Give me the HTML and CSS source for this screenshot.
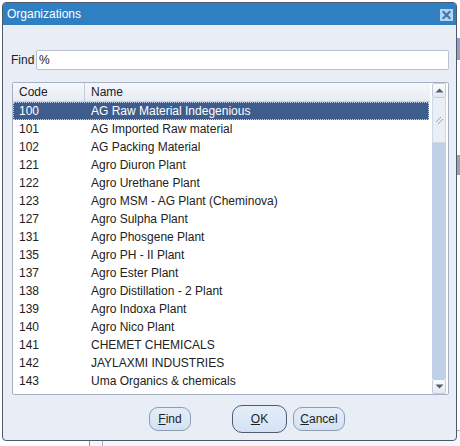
FILE: index.html
```html
<!DOCTYPE html>
<html>
<head>
<meta charset="utf-8">
<link rel="stylesheet" href="styles.css">
</head>
<body>
<div class="backdrop">
  <div class="bd-band"></div>
  <div class="bd-grey"></div>
  <div class="bd-bottom"><div class="bd-inner"></div></div>
</div>
<div class="dialog">
  <div class="titlebar">
    <span class="title">Organizations</span>
    <span class="close"><svg width="13" height="12" viewBox="0 0 13 12"><path d="M3.5 3 L9.5 9 M9.5 3 L3.5 9" stroke="#3a78b8" stroke-width="2.2" stroke-linecap="square"/></svg></span>
  </div>
  <div class="content">
    <div class="find-row">
      <span class="find-label">Find</span>
      <div class="input">%</div>
    </div>
    <div class="list">
      <div class="table">
        <div class="thead"><div class="c1">Code</div><div class="c2">Name</div></div>
        <div class="row sel"><div class="c1">100</div><div class="c2">AG Raw Material Indegenious</div></div>
        <div class="row"><div class="c1">101</div><div class="c2">AG Imported Raw material</div></div>
        <div class="row"><div class="c1">102</div><div class="c2">AG Packing Material</div></div>
        <div class="row"><div class="c1">121</div><div class="c2">Agro Diuron Plant</div></div>
        <div class="row"><div class="c1">122</div><div class="c2">Agro Urethane Plant</div></div>
        <div class="row"><div class="c1">123</div><div class="c2">Agro MSM - AG Plant (Cheminova)</div></div>
        <div class="row"><div class="c1">127</div><div class="c2">Agro Sulpha Plant</div></div>
        <div class="row"><div class="c1">131</div><div class="c2">Agro Phosgene Plant</div></div>
        <div class="row"><div class="c1">135</div><div class="c2">Agro PH - II Plant</div></div>
        <div class="row"><div class="c1">137</div><div class="c2">Agro Ester Plant</div></div>
        <div class="row"><div class="c1">138</div><div class="c2">Agro Distillation - 2 Plant</div></div>
        <div class="row"><div class="c1">139</div><div class="c2">Agro Indoxa Plant</div></div>
        <div class="row"><div class="c1">140</div><div class="c2">Agro Nico Plant</div></div>
        <div class="row"><div class="c1">141</div><div class="c2">CHEMET CHEMICALS</div></div>
        <div class="row"><div class="c1">142</div><div class="c2">JAYLAXMI INDUSTRIES</div></div>
        <div class="row"><div class="c1">143</div><div class="c2">Uma Organics &amp; chemicals</div></div>
      </div>
      <div class="scrollbar">
        <div class="sb-btn"><svg width="9" height="5" viewBox="0 0 9 5"><path d="M0.5 4.5 L4.5 0.5 L8.5 4.5 Z" fill="#555c66"/></svg></div>
        <div class="sb-thumb"><svg width="9" height="9" viewBox="0 0 9 9"><path d="M1 6 L6 1 M3 8 L8 3" stroke="#9aa6b6" stroke-width="1"/></svg></div>
        <div class="sb-track"></div>
        <div class="sb-btn"><svg width="9" height="5" viewBox="0 0 9 5"><path d="M0.5 0.5 L8.5 0.5 L4.5 4.5 Z" fill="#555c66"/></svg></div>
      </div>
    </div>
    <div class="buttons">
      <button class="btn btn-find"><u>F</u>ind</button>
      <button class="btn btn-ok"><u>O</u>K</button>
      <button class="btn btn-cancel"><u>C</u>ancel</button>
    </div>
  </div>
</div>
</body>
</html>
```

FILE: styles.css
```css
html, body {
  margin: 0;
  padding: 0;
  background: #ffffff;
  font-family: "Liberation Sans", Arial, sans-serif;
  font-size: 12px;
  color: #222222;
}

.backdrop {
  position: absolute;
  left: 0;
  top: 0;
  width: 460px;
  height: 446px;
  z-index: 0;
}
.bd-band {
  position: absolute;
  left: 440px;
  top: 38px;
  width: 20px;
  height: 22px;
  background: #8fa3c0;
}
.bd-grey {
  position: absolute;
  left: 440px;
  top: 155px;
  width: 20px;
  height: 20px;
  background: #a0a4aa;
}
.bd-bottom {
  position: absolute;
  left: 89px;
  top: 430px;
  width: 380px;
  height: 30px;
  border-left: 1px solid #8a93a2;
  background: #f4f6f9;
}
.bd-inner {
  margin-left: 12px;
  height: 100%;
  border-left: 1px solid #a9b3c2;
  border-top: 1px solid #a9b3c2;
  border-top-left-radius: 4px;
}

.dialog {
  position: relative;
  z-index: 1;
  box-sizing: border-box;
  margin: 2px 0 0 2px;
  width: 455px;
  height: 439px;
  border: 1px solid #4e5869;
  border-radius: 4px;
  background: #e9eef6;
  display: flex;
  flex-direction: column;
  overflow: hidden;
}

.titlebar {
  height: 22px;
  background: #2f80c3;
  display: flex;
  align-items: center;
  justify-content: space-between;
  padding: 0 3px 0 4px;
  flex: none;
}
.title {
  color: #ffffff;
  font-size: 12px;
}
.close {
  width: 13px;
  height: 12px;
  background: #b8d4ef;
  display: flex;
  margin-top: 1px;
}

.content {
  flex: 1;
  padding: 25px 7px 0 8px;
  display: flex;
  flex-direction: column;
}

.find-row {
  display: flex;
  align-items: center;
  height: 20px;
}
.find-label {
  width: 25px;
}
.input {
  box-sizing: border-box;
  height: 20px;
  flex: 1;
  background: #ffffff;
  border: 1px solid #b6c2d2;
  border-radius: 2px;
  padding: 2px 2px;
  line-height: 14px;
}

.list {
  box-sizing: border-box;
  margin: 12px 0 0 1px;
  height: 313px;
  background: #ffffff;
  border: 1px solid #a6b2c4;
  border-radius: 2px;
  display: flex;
}

.table {
  width: 417px;
  flex: none;
}
.thead {
  display: flex;
  height: 18px;
  background: linear-gradient(#f5f7fb, #e7ecf4);
  border-bottom: 1px solid #c9d1dd;
  line-height: 19px;
}
.thead .c1 {
  border-right: 1px solid #c3cbd8;
}
.c1 {
  box-sizing: border-box;
  width: 72px;
  padding-left: 6px;
  flex: none;
}
.c2 {
  padding-left: 6px;
  white-space: nowrap;
}
.row {
  display: flex;
  height: 18px;
  line-height: 19px;
}
.row.sel {
  box-sizing: border-box;
  background: #3e5d8c;
  color: #ffffff;
  outline: 1px dotted #c7d3e6;
  outline-offset: -1px;
  width: 416px;
}

.scrollbar {
  margin-left: 2px;
  width: 14px;
  display: flex;
  flex-direction: column;
}
.sb-btn {
  box-sizing: border-box;
  height: 15px;
  background: linear-gradient(#fbfcfe, #e3e9f2);
  border: 1px solid #c3ccda;
  border-radius: 2px;
  display: flex;
  align-items: center;
  justify-content: center;
  flex: none;
}
.sb-thumb {
  box-sizing: border-box;
  height: 45px;
  background: #eaeff6;
  border: 1px solid #d0d8e4;
  border-top: none;
  display: flex;
  align-items: center;
  justify-content: center;
  flex: none;
}
.sb-track {
  flex: 1;
  background: #bfd0e7;
}

.buttons {
  display: flex;
  align-items: center;
  margin-top: 10px;
  padding-left: 138px;
  height: 28px;
}
.btn {
  box-sizing: border-box;
  font-family: "Liberation Sans", Arial, sans-serif;
  font-size: 12px;
  color: #222222;
  background: linear-gradient(#e4eef9, #d3e2f3);
  border: 1px solid #8e9db5;
  border-radius: 9px;
  height: 24px;
  padding: 0;
  margin: 0;
}
.btn u {
  text-decoration: underline;
}
.btn-find {
  width: 42px;
}
.btn-ok {
  width: 55px;
  height: 28px;
  margin-left: 41px;
  border: 1px solid #4d5a70;
  border-radius: 10px;
}
.btn-cancel {
  width: 52px;
  margin-left: 6px;
}
```
